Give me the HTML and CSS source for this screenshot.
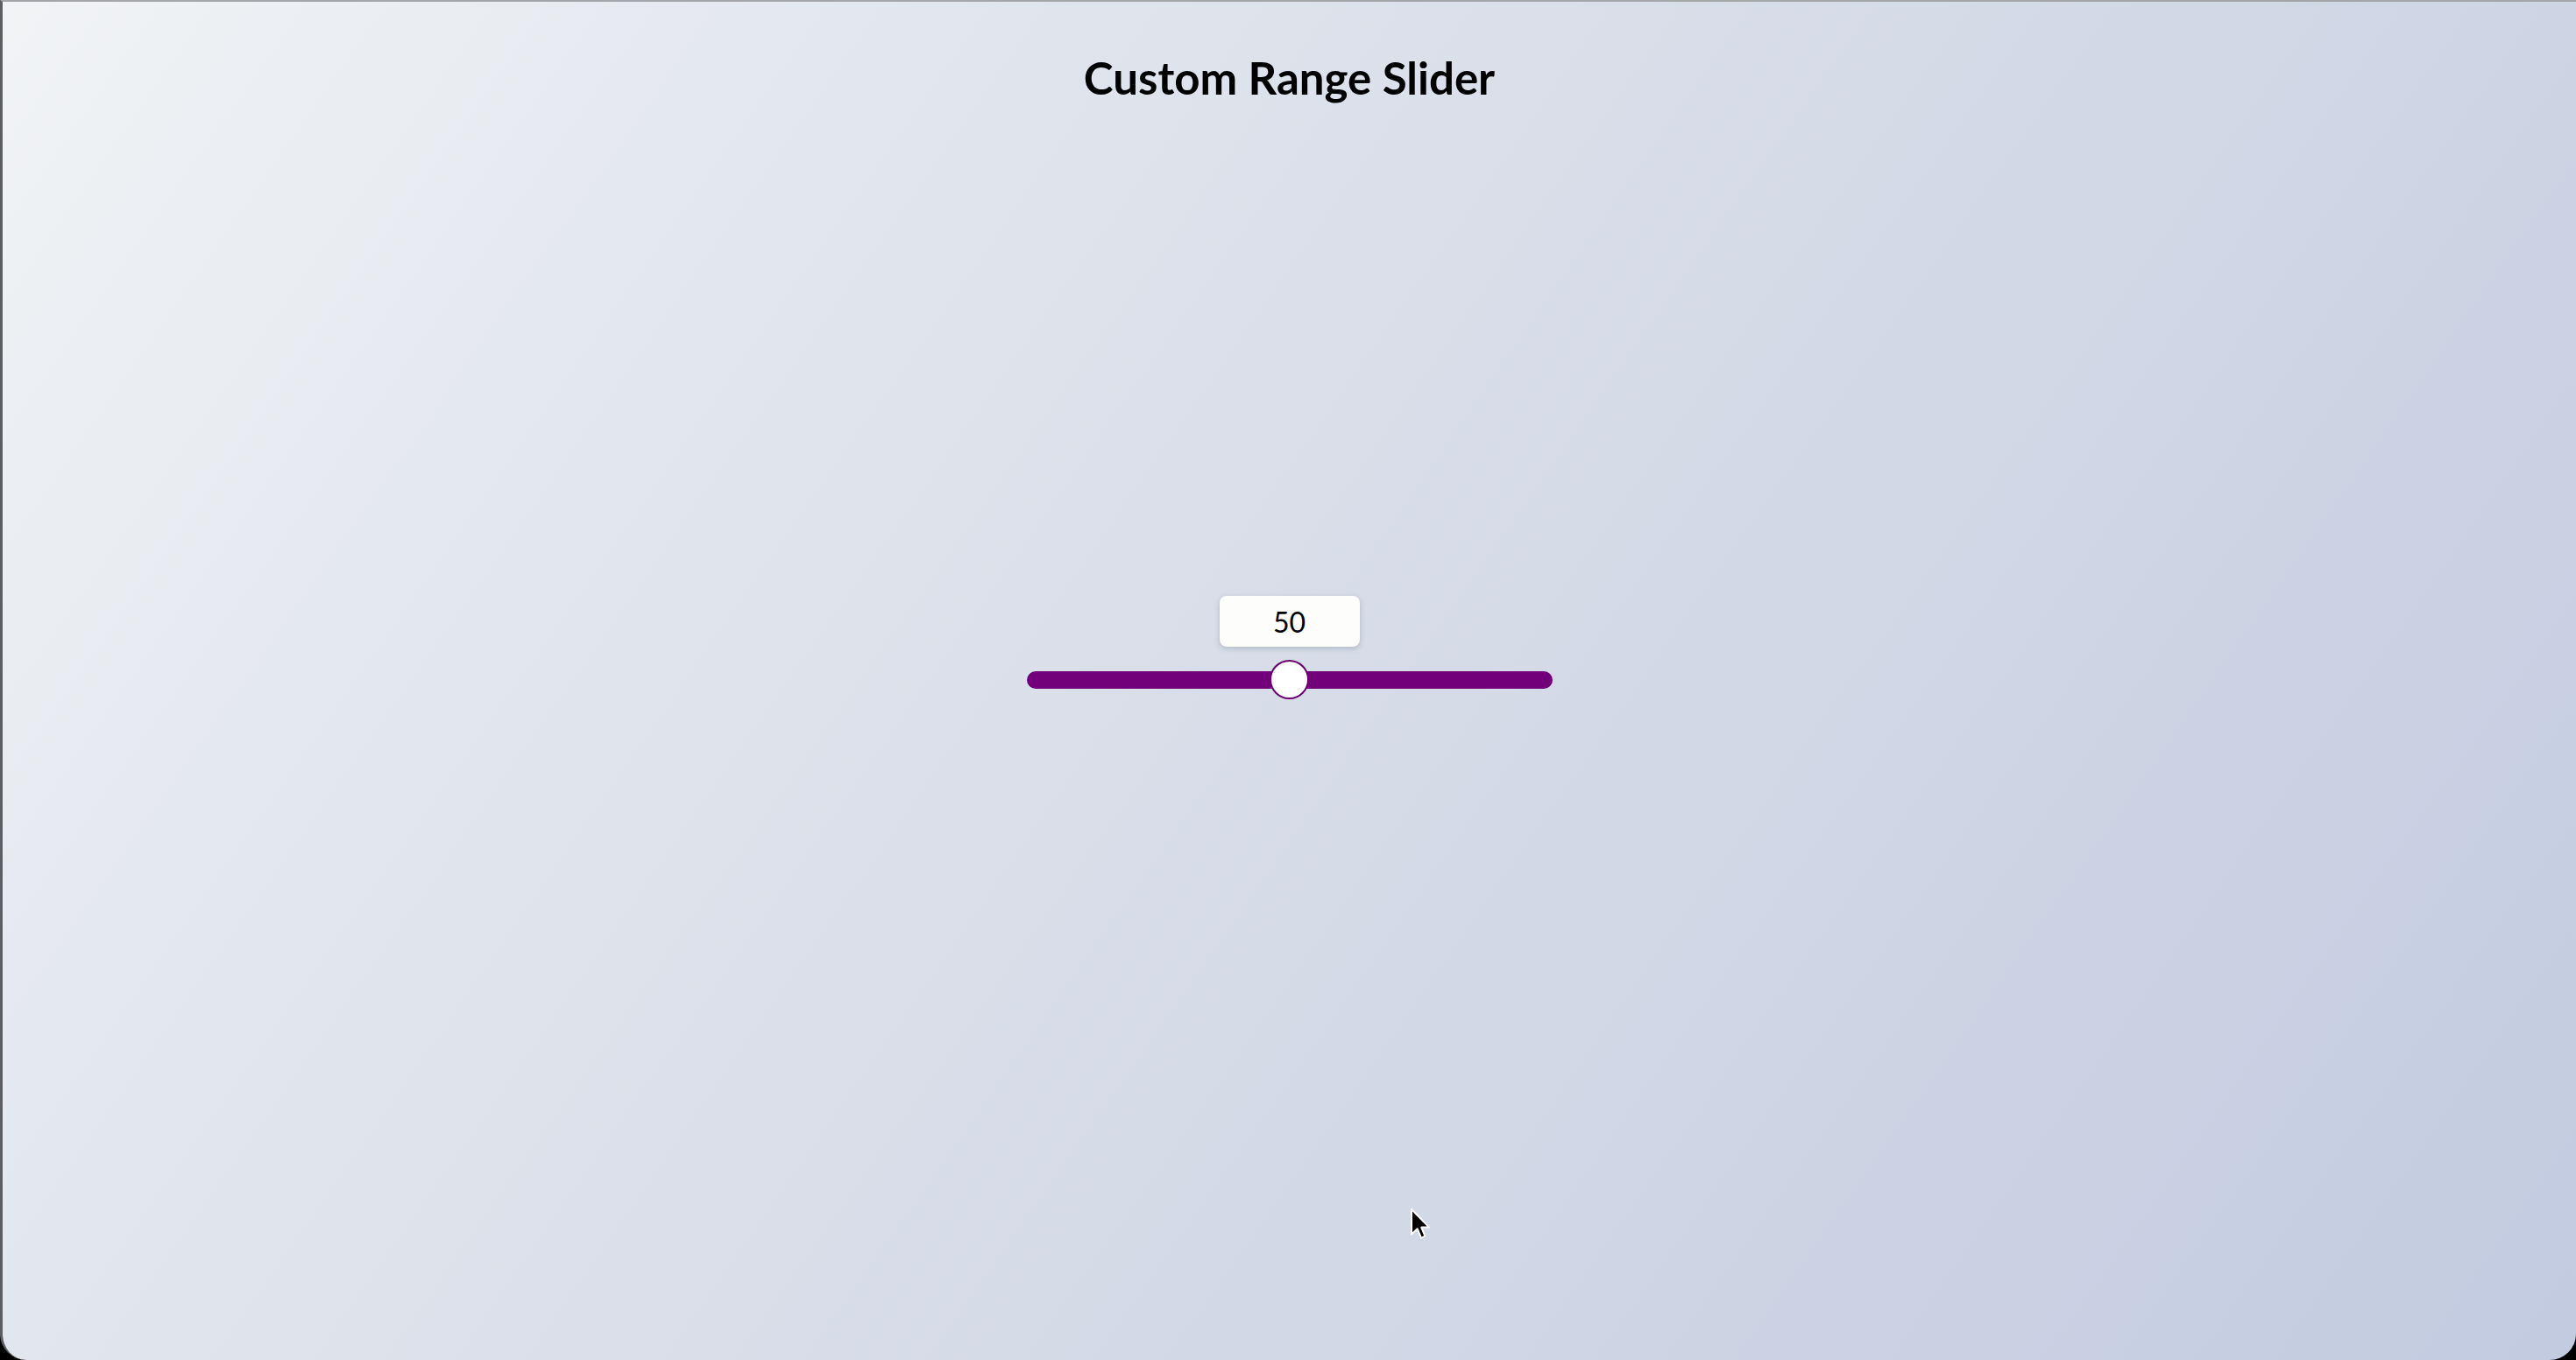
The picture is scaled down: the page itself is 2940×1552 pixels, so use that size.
FILE: index.html
```html
<!DOCTYPE html>
<html lang="en">
<head>
<meta charset="utf-8">
<title>Custom Range Slider</title>
<link rel="stylesheet" href="styles.css">
</head>
<body>
<div class="screen">
  <h1 class="title">Custom Range Slider</h1>
  <div class="stage">
    <div class="track">
      <div class="value">50</div>
      <div class="thumb"></div>
    </div>
  </div>
  <svg class="cursor" width="26" height="38" viewBox="0 0 13 19" xmlns="http://www.w3.org/2000/svg">
    <path d="M1 1 L1 15.2 L4.3 12.1 L6.5 17.3 L8.7 16.3 L6.6 11.3 L11 11.3 Z" fill="#000" stroke="#fff" stroke-width="1" stroke-linejoin="round"/>
  </svg>
</div>
</body>
</html>
```
FILE: styles.css
```css
html, body {
  margin: 0;
  padding: 0;
  height: 100%;
}
body {
  background: #000;
  font-family: Lato, "Open Sans", sans-serif;
  overflow: hidden;
}
.screen {
  position: relative;
  box-sizing: border-box;
  height: 1552px;
  border-top: 2px solid #a3a5a9;
  border-left: 3px solid #5c5e62;
  border-radius: 0 0 30px 30px;
  background: linear-gradient(125deg, #f1f3f5 0%, #e0e5ed 30%, #d5dbe7 55%, #cad2e3 80%, #c2cbe0 100%);
  display: grid;
  grid-template-rows: 1fr;
  grid-template-columns: 1fr;
}
.title {
  grid-area: 1 / 1;
  align-self: start;
  justify-self: center;
  margin: 56px 0 0;
  font-size: 51px;
  font-weight: 700;
  line-height: 1.2;
  color: #000;
}
.stage {
  grid-area: 1 / 1;
  align-self: center;
  justify-self: center;
  margin-top: -2px;
}
.track {
  position: relative;
  width: 600px;
  height: 20px;
  border-radius: 10px;
  background: #71007a;
}
.thumb {
  position: absolute;
  left: 50%;
  top: 50%;
  width: 41px;
  height: 41px;
  margin: -23px 0 0 -23px;
  border: 2.5px solid #6a0070;
  border-radius: 50%;
  background: #fff;
}
.value {
  position: absolute;
  left: 50%;
  bottom: 48px;
  width: 160px;
  height: 58px;
  margin-left: -80px;
  border-radius: 8px;
  background: #fdfdfb;
  box-shadow: 0 2px 6px rgba(60, 70, 100, 0.25);
  display: flex;
  align-items: center;
  justify-content: center;
  font-size: 32px;
  color: #000;
}
.cursor {
  position: absolute;
  left: 1606px;
  top: 1376px;
}
```
